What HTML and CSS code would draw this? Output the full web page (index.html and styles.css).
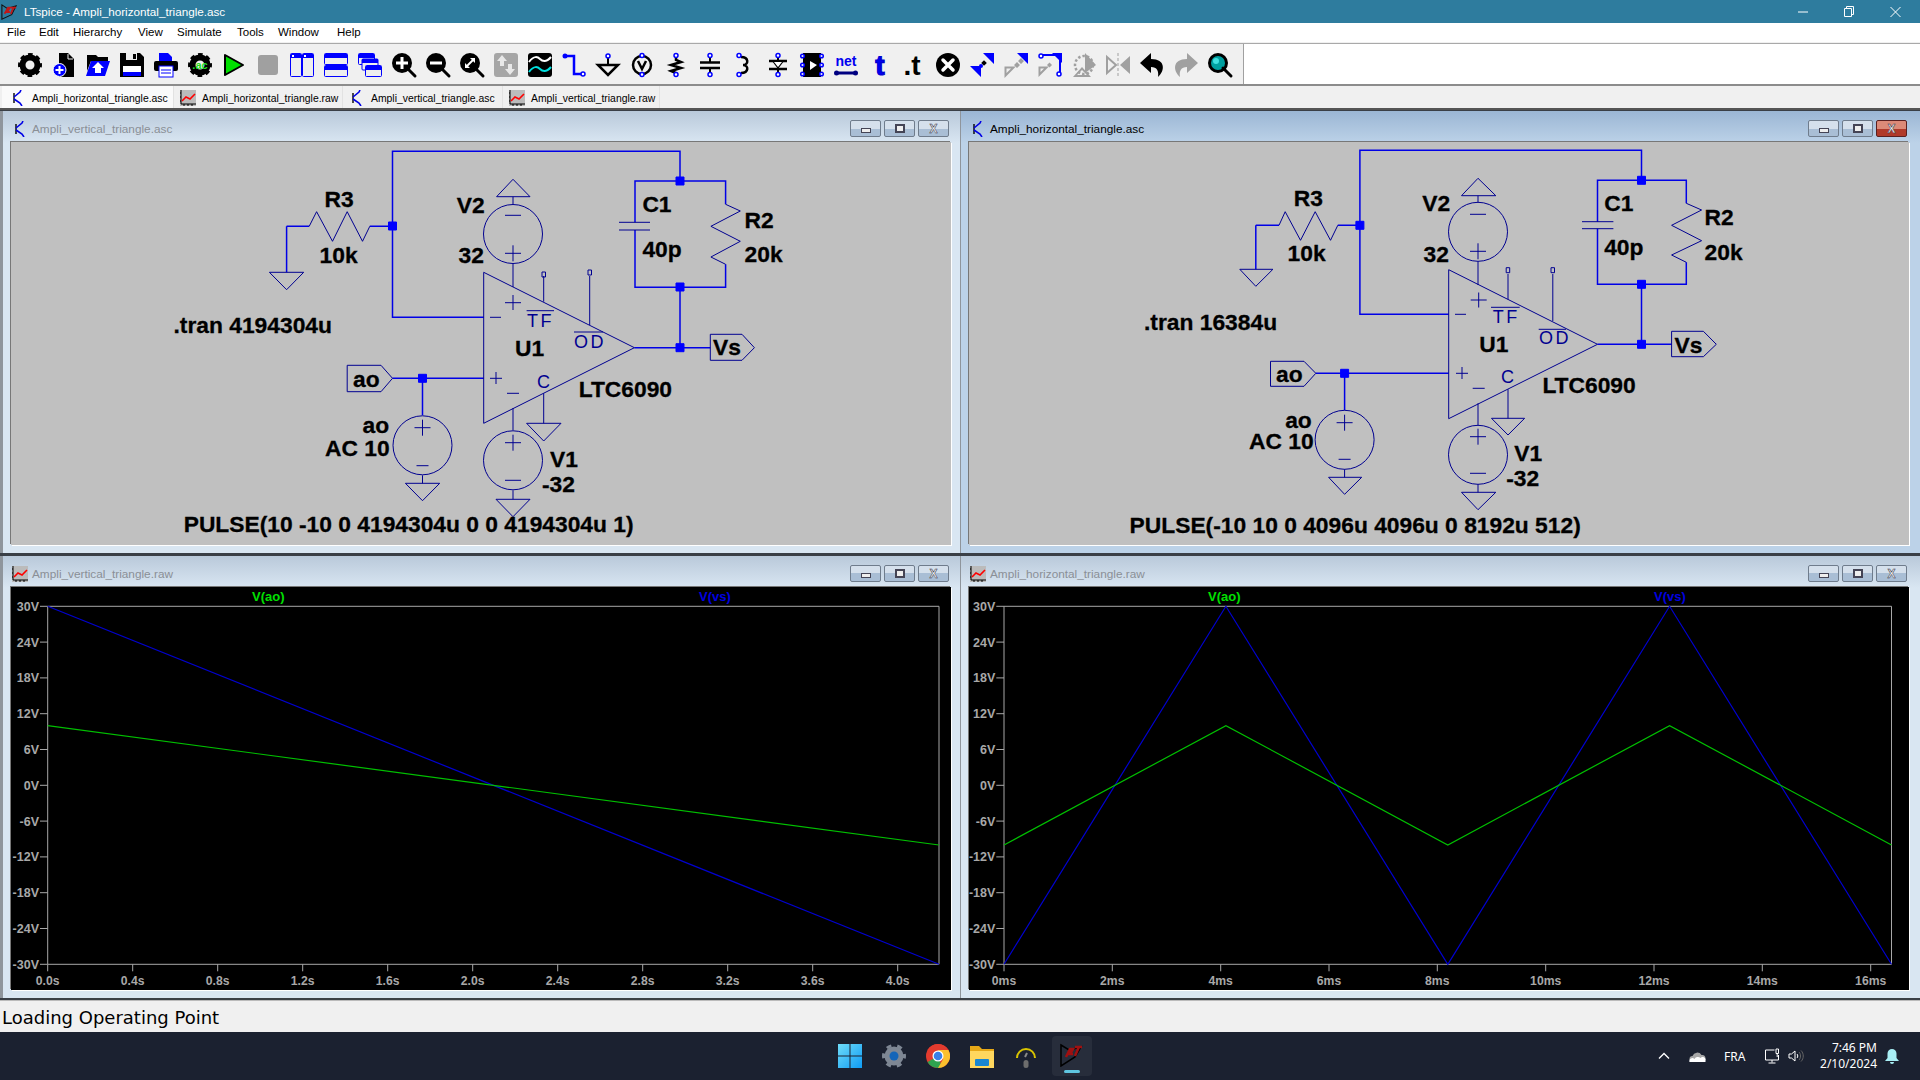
FILE: index.html
```html
<!DOCTYPE html>
<html lang="en">
<head>
<meta charset="utf-8">
<title>LTspice - Ampli_horizontal_triangle.asc</title>
<link rel="stylesheet" href="styles.css">
</head>
<body>
<svg class="defs" width="0" height="0">
<defs>
<symbol id="gear" viewBox="0 0 24 24"><circle cx="12" cy="12" r="7.5" fill="none" stroke="#000" stroke-width="6"/><circle cx="12" cy="12" r="10.5" fill="none" stroke="#000" stroke-width="3" stroke-dasharray="4.6 3.65" stroke-dashoffset="2.3"/></symbol>
<symbol id="sch" viewBox="0 0 16 16"><path d="M4 3v10" fill="none" stroke="#000" stroke-width="1.4"/><path d="M4 7l6-5 1-2M4 9l6 4 2 3" fill="none" stroke="#0000e6" stroke-width="1.6"/></symbol>
<symbol id="raw" viewBox="0 0 16 16"><rect width="16" height="16" fill="#bbb"/><path d="M1 0v14h15M0 3h1M0 7h1M0 11h1M4 14v2M8 14v2M12 14v2" fill="none" stroke="#000"/><path d="M2 11l4-4 4 2 5-5" fill="none" stroke="#f00" stroke-width="1.6"/></symbol>
</defs>
</svg>

<header class="titlebar">
  <svg class="app-icon" viewBox="0 0 18 18"><path d="M1 1l6 4 10-3-5 10-11 5z" fill="#2e7c9e" stroke="#111" stroke-width="1.2"/><path d="M4 11l4-7h2l-3 5h3M11 4h6M14 4l-3 7" fill="none" stroke="#c01818" stroke-width="2"/></svg>
  <span class="title-text">LTspice - Ampli_horizontal_triangle.asc</span>
  <div class="caption">
    <svg viewBox="0 0 46 14" class="cap-icon"><path d="M0 7h10" stroke="#fff" fill="none"/></svg>
    <svg viewBox="0 0 46 14" class="cap-icon"><path d="M.5 3.500h7v8h-7zM2.500 3.500v-2h7v8h-2" stroke="#fff" fill="none"/></svg>
    <svg viewBox="0 0 30 14" class="cap-icon cap-x"><path d="M.5 2l10 10M10.500 2l-10 10" stroke="#fff" fill="none"/></svg>
  </div>
</header>

<nav class="menubar">
  <span class="m1">File</span><span class="m2">Edit</span><span class="m3">Hierarchy</span><span class="m4">View</span><span class="m5">Simulate</span><span class="m6">Tools</span><span class="m7">Window</span><span class="m8">Help</span>
</nav>

<div class="toolbar">
  <div class="tools">
    <svg viewBox="0 0 24 24"><use href="#gear"/></svg>
    <svg viewBox="0 0 24 24"><path d="M7 0h9l6 6v18H7z"/><path d="M16 1v5h5" fill="none" stroke="#eee"/><circle cx="7.500" cy="17" r="6.500" fill="#00f" stroke="#fff"/><path d="M3.500 17h8M7.500 13v8" stroke="#fff" stroke-width="2"/></svg>
    <svg viewBox="0 0 24 24"><path d="M1 2h9l2 2h10v4H5l-4 10z"/><path d="M5 8h19l-5 15H0z" fill="#00f"/><path d="M12 9l6 6h-3v5h-6v-5H6z" fill="#fff"/></svg>
    <svg viewBox="0 0 24 24"><path d="M0 0h20l4 4v20H0z"/><rect x="6" y="0" width="11" height="7" fill="#eee"/><rect x="13" y="1" width="3" height="5"/><rect x="3" y="13" width="18" height="6" fill="#fff"/><rect x="3" y="19" width="18" height="4" fill="#00f"/></svg>
    <svg viewBox="0 0 24 24"><path d="M5 0h9l4 4v4H5z" fill="#00f"/><rect y="8" width="24" height="10" rx="2"/><rect x="5" y="13" width="14" height="11" fill="#fff" stroke="#00f"/><path d="M7 17h10M7 20h10" stroke="#00f"/></svg>
    <svg viewBox="0 0 24 24"><use href="#gear"/><text x="12" y="16" class="ac">.ac</text></svg>
    <svg viewBox="0 0 24 24"><path d="M3 2l18 10L3 22z" fill="#00e000" stroke="#000" stroke-width="2" stroke-linejoin="round"/></svg>
    <svg viewBox="0 0 24 24"><rect x="2" y="2" width="20" height="20" rx="3" fill="#a0a0a0"/></svg>
    <svg viewBox="0 0 24 24"><rect x=".5" y=".5" width="11" height="23" rx="1" fill="#eee" stroke="#00f"/><rect x="12.500" y=".5" width="11" height="23" rx="1" fill="#eee" stroke="#00f"/><path d="M1 1h10v4H1zM13 1h10v4H13z" fill="#00f"/><path d="M2 2h2v2H2zM14 2h2v2h-2z" fill="#fff"/></svg>
    <svg viewBox="0 0 24 24"><rect x=".5" y=".5" width="23" height="11" rx="1" fill="#eee" stroke="#00f"/><rect x=".5" y="12.500" width="23" height="11" rx="1" fill="#eee" stroke="#00f"/><path d="M1 1h22v4H1zM1 13h22v4H1z" fill="#00f"/></svg>
    <svg viewBox="0 0 24 24"><rect x=".5" y=".5" width="16" height="11" rx="1" fill="#eee" stroke="#00f"/><path d="M1 1h15v4H1z" fill="#00f"/><rect x="4" y="6" width="16" height="11" rx="1" fill="#eee" stroke="#00f"/><path d="M4 6h16v4H4z" fill="#00f"/><rect x="7.500" y="12.500" width="16" height="11" rx="1" fill="#eee" stroke="#00f"/><path d="M8 13h15v4H8z" fill="#00f"/></svg>
    <svg viewBox="0 0 24 24"><circle cx="10" cy="10" r="10"/><path d="M15 15l8 8" stroke="#000" stroke-width="3" stroke-linecap="round"/><path d="M4 10h12M10 4v12" stroke="#fff" stroke-width="3"/></svg>
    <svg viewBox="0 0 24 24"><circle cx="10" cy="10" r="10"/><path d="M15 15l8 8" stroke="#000" stroke-width="3" stroke-linecap="round"/><path d="M4 10h12" stroke="#fff" stroke-width="3"/></svg>
    <svg viewBox="0 0 24 24"><circle cx="10" cy="10" r="10"/><path d="M15 15l8 8" stroke="#000" stroke-width="3" stroke-linecap="round"/><path d="M6 14L14 6" stroke="#fff" stroke-width="2"/><path d="M10 5h5v5zM5 10v5h5z" fill="#fff"/></svg>
    <svg viewBox="0 0 24 24"><rect width="24" height="24" rx="3" fill="#a6a6a6"/><path d="M8 2l5 6h-3v5H6V8H3zM16 22l-5-6h3v-5h4v5h3z" fill="#e8e8e8"/></svg>
    <svg viewBox="0 0 24 24"><rect width="24" height="24" rx="3"/><path d="M1 9c5-7 9-5 11-3s6 4 11-2" fill="none" stroke="#fff" stroke-width="2"/><path d="M1 19c5-7 9-5 11-3s6 4 11-2" fill="none" stroke="#00e0e0" stroke-width="2"/></svg>
    <svg viewBox="0 0 24 24"><path d="M3 3h9v18h8" fill="none" stroke="#00f" stroke-width="2.500"/><circle cx="3" cy="3" r="2.500" fill="#00f"/><circle cx="21" cy="21" r="2" fill="#fff" stroke="#00f" stroke-width="1.500"/></svg>
    <svg viewBox="0 0 24 24"><path d="M12 4v7" stroke="#000" stroke-width="2"/><path d="M2 12h20L12 22z" fill="none" stroke="#000" stroke-width="2.500"/><circle cx="12" cy="3" r="2" fill="#fff" stroke="#00f" stroke-width="1.500"/></svg>
    <svg viewBox="0 0 24 24"><circle cx="12" cy="12" r="9" fill="none" stroke="#000" stroke-width="2.500"/><path d="M8 8l4 8 4-8" fill="none" stroke="#000" stroke-width="2.500"/><circle cx="12" cy="2.500" r="2" fill="#fff" stroke="#00f" stroke-width="1.500"/><circle cx="12" cy="21.500" r="2" fill="#fff" stroke="#00f" stroke-width="1.500"/></svg>
    <svg viewBox="0 0 24 24"><path d="M12 5v2l5 2-10 3 10 3-10 3 5 2v1" fill="none" stroke="#000" stroke-width="2.500"/><circle cx="12" cy="2.500" r="2" fill="#fff" stroke="#00f" stroke-width="1.500"/><circle cx="12" cy="21.500" r="2" fill="#fff" stroke="#00f" stroke-width="1.500"/></svg>
    <svg viewBox="0 0 24 24"><path d="M12 4v5M12 15v5" stroke="#000" stroke-width="2"/><path d="M2 9.500h20M2 15h20" stroke="#000" stroke-width="2.500"/><circle cx="12" cy="2.500" r="2" fill="#fff" stroke="#00f" stroke-width="1.500"/><circle cx="12" cy="21.500" r="2" fill="#fff" stroke="#00f" stroke-width="1.500"/></svg>
    <svg viewBox="0 0 24 24"><path d="M9 4c8 0 8 8 2 8 6 0 6 8-2 8" fill="none" stroke="#000" stroke-width="2.500"/><circle cx="7" cy="2.500" r="2" fill="#fff" stroke="#00f" stroke-width="1.500"/><circle cx="7" cy="21.500" r="2" fill="#fff" stroke="#00f" stroke-width="1.500"/></svg>
    <svg viewBox="0 0 24 24"><path d="M12 4v16" stroke="#000" stroke-width="2"/><path d="M3 8h18M3 16h18" stroke="#000" stroke-width="2.500"/><path d="M6 8h12l-6 8z"/><path d="M8 9h8l-4 5z" fill="#fff"/><circle cx="12" cy="2.500" r="2" fill="#fff" stroke="#00f" stroke-width="1.500"/><circle cx="12" cy="21.500" r="2" fill="#fff" stroke="#00f" stroke-width="1.500"/></svg>
    <svg viewBox="0 0 24 24"><rect x="3" y="0" width="18" height="24"/><path d="M10 8l7 4-7 5z" fill="#fff"/><g fill="#eee" stroke="#00f" stroke-width="1.500"><circle cx="2.500" cy="3" r="1.800"/><circle cx="21.500" cy="3" r="1.800"/><circle cx="2.500" cy="12" r="1.800"/><circle cx="21.500" cy="12" r="1.800"/><circle cx="2.500" cy="21" r="1.800"/><circle cx="21.500" cy="21" r="1.800"/></g></svg>
    <svg viewBox="0 0 24 24"><text x="12" y="13" class="net">net</text><path d="M2 20h20" stroke="#000080" stroke-width="3"/><circle cx="2.500" cy="20" r="2.500" fill="#000080"/><circle cx="21.500" cy="20" r="2.500" fill="#000080"/></svg>
    <svg viewBox="0 0 24 24"><text x="12" y="22" class="tt blue">t</text></svg>
    <svg viewBox="0 0 24 24"><text x="10" y="22" class="tt">.t</text></svg>
    <svg viewBox="0 0 24 24"><circle cx="12" cy="12" r="12"/><path d="M7 7l10 10M17 7L7 17" stroke="#fff" stroke-width="3.500" stroke-linecap="round"/></svg>
    <svg viewBox="0 0 24 24"><path d="M24 0v11L13 0zM0 13h11v11z" fill="#00f"/><circle cx="11" cy="13" r="2" fill="#00f"/><rect x="12" y="8" width="4" height="4" transform="rotate(45 14 10)" fill="#000"/></svg>
    <svg viewBox="0 0 24 24"><path d="M24 0v11L13 0z" fill="#00f"/><path d="M1.500 14.500h8l-8 8z" fill="none" stroke="#a0a0a0" stroke-width="2"/><path d="M10 12l3-3 3 3-3 3zM14 8l3-3 3 3-3 3z" fill="#a0a0a0"/></svg>
    <svg viewBox="0 0 24 24"><path d="M5 2h17v17" fill="none" stroke="#00f" stroke-width="2"/><path d="M24 0v10L14 0z" fill="#00f"/><circle cx="3" cy="3" r="2" fill="#fff" stroke="#00f" stroke-width="1.500"/><circle cx="21" cy="21" r="2" fill="#fff" stroke="#00f" stroke-width="1.500"/><path d="M1.500 14.500h7l-7 7z" fill="none" stroke="#a0a0a0" stroke-width="2"/><path d="M9 12l2.500-2.500 2.500 2.500-2.500 2.500z" fill="#a0a0a0"/></svg>
    <svg viewBox="0 0 24 24"><path d="M13 0l11 12-11 8z" fill="#a0a0a0"/><path d="M1 24l9-10 9 10z M5 22h10l-5-5z" fill="#a0a0a0" fill-rule="evenodd"/><circle cx="12" cy="12" r="9" fill="none" stroke="#a0a0a0" stroke-width="2.500" stroke-dasharray="2.500 2"/></svg>
    <svg viewBox="0 0 24 24"><path d="M24 3v18l-10-9z" fill="#a0a0a0"/><path d="M1 4l9 8-9 8z" fill="none" stroke="#a0a0a0" stroke-width="2"/><path d="M12 0v24" stroke="#a0a0a0" stroke-dasharray="3 2"/></svg>
    <svg viewBox="0 0 24 24"><path d="M11 0L0 10l11 10v-6c6 0 8 4 7 10 7-6 8-18-7-18z"/></svg>
    <svg viewBox="0 0 24 24"><path d="M13 0l11 10-11 10v-6C7 14 5 18 6 24-1 18-2 6 13 6z" fill="#a0a0a0"/></svg>
    <svg viewBox="0 0 24 24"><circle cx="10" cy="10" r="8.500" fill="#00a0a0" stroke="#000" stroke-width="3"/><circle cx="8" cy="8" r="3" fill="#40e0e0"/><path d="M15 15l8 8" stroke="#000" stroke-width="3" stroke-linecap="round"/></svg>
  </div>
</div>

<div class="tabs">
  <div class="tab tab-active"><svg class="tab-icon"><use href="#sch"/></svg>Ampli_horizontal_triangle.asc</div>
  <div class="tab"><svg class="tab-icon"><use href="#raw"/></svg>Ampli_horizontal_triangle.raw</div>
  <div class="tab"><svg class="tab-icon"><use href="#sch"/></svg>Ampli_vertical_triangle.asc</div>
  <div class="tab"><svg class="tab-icon"><use href="#raw"/></svg>Ampli_vertical_triangle.raw</div>
</div>

<main class="mdi">
  <section class="win win-left">
    <div class="win-title"><svg class="win-icon"><use href="#sch"/></svg><span class="win-name">Ampli_vertical_triangle.asc</span>
      <div class="btns"><b class="btn"><i class="g-min"></i></b><b class="btn"><i class="g-max"></i></b><b class="btn"><i class="g-x">X</i></b></div></div>
    <svg class="canvas sch" viewBox="11 142 940 403" width="940" height="403">
      <path class="wire" d="M392.500 226.300V151.300H680V181M635 222.300V181H725.600V204.300M392.500 226.300V317.300H483.700M635 230V287.300H725.600V264.300M680 287.300V347.700M634.400 347.700H710.300M392.500 378.300H483.700M422.500 378.300V415.300M286.600 226.300V272.300M286.600 226.300H309.200M369.800 226.300H392.500"/>
      <path class="comp" d="M309.200 226.300L316.600 211.700 332.500 241.300 347.200 211.700 362.500 241.300 369.800 226.300M269.400 272.300H303.700L286.600 289.700ZM513 196.700V204M496.600 196.700H530L513 179.300ZM513 263.700V287M483.700 272.300L634.400 347.700 483.700 423.300ZM543.700 276V301.700M589.700 276V325M543.700 393.300V423.300M526.600 423.300H561L543.700 441ZM513 408V430.300M513 490.300V499.300M496 499.300H530L513 516.700ZM422.500 475.300V483.300M405.400 483.300H439.700L422.500 500.700ZM619 222.300H650M619 230H650M725.600 204.300L740.300 211 710.900 226.300 740.300 241.300 710.900 257 725.600 264.300M710.300 334.300H742L754.400 347.700 742 360.300H710.300ZM347.200 365.300H381L392.500 378.300 381 391.700H347.200ZM505 215.300H521M505 253.300H521M513 245.300V261.300M505 442.700H521M513 434.700V450.700M505 480.300H521M414.500 427.700H430.500M422.500 419.700V435.700M416.500 465.700H428.500M505 302.700H521M513 295V310M490 317.300H501M490 378.300H502M496 372V384M507 393.300H519M526.600 310.700H554M574 332H603M542 272h3.500v5H542ZM588 270h3.500v5H588Z"/>
      <circle class="comp" cx="513" cy="234" r="29.500"/><circle class="comp" cx="513" cy="460.300" r="29.500"/><circle class="comp" cx="422.500" cy="445.300" r="29.500"/>
      <path class="jct" d="M676 177h8v8h-8zM676 283h8v8h-8zM388.500 222h8v8h-8zM676 343.700h8v8h-8zM418.500 374.300h8v8h-8z"/>
      <text class="s" x="527" y="326.700">TF</text><text class="s" x="574" y="348">OD</text><text class="s cc" x="537" y="387.700">C</text>
      <text class="t" x="324.500" y="206.700">R3</text><text class="t" x="319.600" y="262.700">10k</text><text class="t" x="456.800" y="212.700">V2</text><text class="t" x="458.600" y="263.300">32</text>
      <text class="t" x="642.400" y="211.500">C1</text><text class="t" x="642.400" y="257.300">40p</text><text class="t" x="744.600" y="228">R2</text><text class="t" x="744.600" y="262">20k</text>
      <text class="t" x="515" y="355.700">U1</text><text class="t" x="578.700" y="397.300">LTC6090</text><text class="t" x="713" y="355">Vs</text><text class="t" x="353" y="386.700">ao</text>
      <text class="t" x="362.500" y="432.700">ao</text><text class="t" x="325" y="455.700">AC 10</text><text class="t" x="550" y="466.700">V1</text><text class="t" x="542" y="491.700">-32</text>
      <text class="t" x="173.500" y="333.300">.tran 4194304u</text><text class="t" x="183.700" y="531.700">PULSE(10 -10 0 4194304u 0 0 4194304u 1)</text>
    </svg>
  </section>

  <section class="win win-right win-active">
    <div class="win-title"><svg class="win-icon"><use href="#sch"/></svg><span class="win-name">Ampli_horizontal_triangle.asc</span>
      <div class="btns"><b class="btn"><i class="g-min"></i></b><b class="btn"><i class="g-max"></i></b><b class="btn btn-close"><i class="g-x">X</i></b></div></div>
    <svg class="canvas sch" viewBox="969 142 940 403" width="940" height="403">
      <path class="wire" d="M1359.900 225.300V150.300H1641.500V180.300M1597.500 221.700V180.300H1686.300V203.300M1359.900 225.300V314.300H1448.700M1597.500 228.700V284.300H1686.300V262.300M1641.500 284.300V344.300M1597.500 344.300H1671.600M1315.800 373.300H1448.700M1344.600 373.300V410.300M1255.800 225.300V269.300M1255.800 225.300H1279M1337.800 225.300H1359.900"/>
      <path class="comp" d="M1279 225.300L1285.200 211.700 1300.500 240.300 1315.200 211.700 1330.500 240.300 1337.800 225.300M1239.800 269.300H1272.900L1255.800 286.300ZM1478 195.700V202.300M1461.500 195.700H1495.800L1478 178.300ZM1478 261.300V285M1448.700 269.700L1597.500 344.300 1448.700 418.700ZM1508 274V299.300M1552.800 274V321M1508 389.300V418.300M1491.500 418.300H1524.600L1508 435ZM1478 403.300V425.300M1478 484.300V492.300M1461.500 492.300H1495.800L1478 509.700ZM1344.600 469.300V477.300M1328.600 477.300H1361.700L1344.600 494.300ZM1582 221.700H1613.400M1582 228.700H1613.400M1686.300 203.300L1701.600 210 1671.600 225.300 1701.600 240.700 1671.600 255 1686.300 262.300M1671.600 331.300H1703.400L1716.300 344.300 1703.400 356.700H1671.600ZM1270.500 361.300H1304L1315.800 373.300 1304 386.300H1270.500ZM1470 214.300H1486M1470 251.300H1486M1478 243.300V259.300M1470 436.700H1486M1478 428.700V444.700M1470 473.300H1486M1336.600 422.700H1352.600M1344.600 414.700V430.700M1338.600 459.300H1350.600M1470.700 300H1486.700M1478.700 292.500V307.500M1455 314.300H1466M1456 373.300H1468M1462 367V379M1472.700 388.300H1484.700M1491 307.300H1519.700M1538.700 329.300H1566M1506.200 267.700h3.500v5h-3.500ZM1551 267.700h3.500v5H1551Z"/>
      <circle class="comp" cx="1478" cy="231.800" r="29.500"/><circle class="comp" cx="1478" cy="454.800" r="29.500"/><circle class="comp" cx="1344.600" cy="439.800" r="29.500"/>
      <path class="jct" d="M1637.500 176.300h8v8h-8zM1637.500 280.300h8v8h-8zM1355.900 221.300h8v8h-8zM1637.500 340.300h8v8h-8zM1340.600 369.300h8v8h-8z"/>
      <text class="s" x="1492.700" y="323.300">TF</text><text class="s" x="1539" y="344.300">OD</text><text class="s cc" x="1501" y="382.700">C</text>
      <text class="t" x="1293.700" y="206">R3</text><text class="t" x="1287.600" y="260.700">10k</text><text class="t" x="1422.300" y="210.700">V2</text><text class="t" x="1423.600" y="261.700">32</text>
      <text class="t" x="1604.200" y="210.700">C1</text><text class="t" x="1604.200" y="255.300">40p</text><text class="t" x="1704.600" y="225.300">R2</text><text class="t" x="1704.600" y="259.700">20k</text>
      <text class="t" x="1479.300" y="352.300">U1</text><text class="t" x="1542.400" y="392.700">LTC6090</text><text class="t" x="1674.600" y="352.700">Vs</text><text class="t" x="1276" y="381.700">ao</text>
      <text class="t" x="1285.200" y="427.700">ao</text><text class="t" x="1249" y="449.300">AC 10</text><text class="t" x="1514.200" y="460.700">V1</text><text class="t" x="1506.200" y="485.700">-32</text>
      <text class="t" x="1144" y="329.700">.tran 16384u</text><text class="t" x="1129.600" y="532.700">PULSE(-10 10 0 4096u 4096u 0 8192u 512)</text>
    </svg>
  </section>

  <section class="win win-left">
    <div class="win-title"><svg class="win-icon"><use href="#raw"/></svg><span class="win-name">Ampli_vertical_triangle.raw</span>
      <div class="btns"><b class="btn"><i class="g-min"></i></b><b class="btn"><i class="g-max"></i></b><b class="btn"><i class="g-x">X</i></b></div></div>
    <svg class="canvas plot" viewBox="11 587 940 403" width="940" height="403">
      <path class="axis" d="M47.700 606.300H939V964.300H47.700ZM40 606.300h7.700M40 642.100h7.700M40 677.900h7.700M40 713.700h7.700M40 749.500h7.700M40 785.300h7.700M40 821.100h7.700M40 856.900h7.700M40 892.700h7.700M40 928.500h7.700M40 964.300h7.700M47.700 964.300v7M132.700 964.300v7M217.700 964.300v7M302.700 964.300v7M387.700 964.300v7M472.700 964.300v7M557.700 964.300v7M642.700 964.300v7M727.700 964.300v7M812.700 964.300v7M897.700 964.300v7"/>
      <path class="blue" d="M47.700 606.300L939 964.300"/><path class="green" d="M47.700 725.600L939 845"/>
      <text class="lg g" x="252" y="601">V(ao)</text><text class="lg b" x="699" y="601">V(vs)</text>
      <g class="yl"><text x="39" y="610.800">30V</text><text x="39" y="646.600">24V</text><text x="39" y="682.400">18V</text><text x="39" y="718.200">12V</text><text x="39" y="754">6V</text><text x="39" y="789.800">0V</text><text x="39" y="825.600">-6V</text><text x="39" y="861.400">-12V</text><text x="39" y="897.200">-18V</text><text x="39" y="933">-24V</text><text x="39" y="968.800">-30V</text></g>
      <g class="xl"><text x="47.700" y="985">0.0s</text><text x="132.700" y="985">0.4s</text><text x="217.700" y="985">0.8s</text><text x="302.700" y="985">1.2s</text><text x="387.700" y="985">1.6s</text><text x="472.700" y="985">2.0s</text><text x="557.700" y="985">2.4s</text><text x="642.700" y="985">2.8s</text><text x="727.700" y="985">3.2s</text><text x="812.700" y="985">3.6s</text><text x="897.700" y="985">4.0s</text></g>
    </svg>
  </section>

  <section class="win win-right">
    <div class="win-title"><svg class="win-icon"><use href="#raw"/></svg><span class="win-name">Ampli_horizontal_triangle.raw</span>
      <div class="btns"><b class="btn"><i class="g-min"></i></b><b class="btn"><i class="g-max"></i></b><b class="btn"><i class="g-x">X</i></b></div></div>
    <svg class="canvas plot" viewBox="969 587 940 403" width="940" height="403">
      <path class="axis" d="M1004 606.300H1891.500V964.300H1004ZM996.300 606.300h7.700M996.300 642.100h7.700M996.300 677.900h7.700M996.300 713.700h7.700M996.300 749.500h7.700M996.300 785.300h7.700M996.300 821.100h7.700M996.300 856.900h7.700M996.300 892.700h7.700M996.300 928.500h7.700M996.300 964.300h7.700M1004 964.300v7M1112.300 964.300v7M1220.700 964.300v7M1329 964.300v7M1437.300 964.300v7M1545.700 964.300v7M1654 964.300v7M1762.300 964.300v7M1870.700 964.300v7"/>
      <path class="blue" d="M1004 964.300L1225.900 606.300 1447.800 964.300 1669.600 606.300 1891.500 964.300"/><path class="green" d="M1004 845L1225.900 725.600 1447.800 845 1669.600 725.600 1891.500 845"/>
      <text class="lg g" x="1208" y="601">V(ao)</text><text class="lg b" x="1654" y="601">V(vs)</text>
      <g class="yl"><text x="995.300" y="610.800">30V</text><text x="995.300" y="646.600">24V</text><text x="995.300" y="682.400">18V</text><text x="995.300" y="718.200">12V</text><text x="995.300" y="754">6V</text><text x="995.300" y="789.800">0V</text><text x="995.300" y="825.600">-6V</text><text x="995.300" y="861.400">-12V</text><text x="995.300" y="897.200">-18V</text><text x="995.300" y="933">-24V</text><text x="995.300" y="968.800">-30V</text></g>
      <g class="xl"><text x="1004" y="985">0ms</text><text x="1112.300" y="985">2ms</text><text x="1220.700" y="985">4ms</text><text x="1329" y="985">6ms</text><text x="1437.300" y="985">8ms</text><text x="1545.700" y="985">10ms</text><text x="1654" y="985">12ms</text><text x="1762.300" y="985">14ms</text><text x="1870.700" y="985">16ms</text></g>
    </svg>
  </section>
</main>

<div class="status">Loading Operating Point</div>

<footer class="taskbar">
  <div class="task-apps">
    <svg class="ti" viewBox="0 0 24 24"><defs><linearGradient id="win" x1="0" y1="0" x2="1" y2="1"><stop offset="0" stop-color="#6fdcf8"/><stop offset="1" stop-color="#0f9cf5"/></linearGradient></defs><path d="M0 0h11.500v11.500H0zM12.500 0H24v11.500H12.500zM0 12.500h11.500V24H0zM12.500 12.500H24V24H12.500z" fill="url(#win)"/></svg>
    <svg class="ti" viewBox="0 0 24 24"><circle cx="12" cy="12" r="6.500" fill="none" stroke="#7e8794" stroke-width="6"/><circle cx="12" cy="12" r="10.500" fill="none" stroke="#7e8794" stroke-width="3" stroke-dasharray="5 5.990" stroke-dashoffset="2.500"/><circle cx="12" cy="12" r="4.500" fill="#1565b8"/></svg>
    <svg class="ti" viewBox="0 0 24 24"><circle cx="12" cy="12" r="12" fill="#e33b2e"/><path d="M12 12L1.600 18A12 12 0 0 0 12 24 12 12 0 0 0 16 23.300z" fill="#2ea44f"/><path d="M12 6h10.400A12 12 0 0 1 12 24l5.200-9z" fill="#fbc02d"/><path d="M12 6h10.400A12 12 0 0 0 1.600 6L6.800 15z" fill="#e33b2e"/><circle cx="12" cy="12" r="5.500" fill="#fff"/><circle cx="12" cy="12" r="4.300" fill="#3a80e8"/></svg>
    <svg class="ti" viewBox="0 0 24 24"><path d="M0 2h9l3 3h12v19H0z" fill="#e6a817"/><path d="M0 7h24v17H0z" fill="#ffd75e"/><rect x="5" y="15" width="14" height="7" rx="1" fill="#1a86d0"/></svg>
    <svg class="ti" viewBox="0 0 24 24"><path d="M3 14a9 9 0 1 1 18 0" fill="none" stroke="#d9c400" stroke-width="2"/><path d="M13 9l-2 4" stroke="#8a8a8a" stroke-width="2"/><rect x="9.500" y="16" width="5" height="8" rx="2.500" fill="#6d6d6d"/></svg>
    <div class="task-active"><svg viewBox="0 0 24 24"><path d="M1 2l8 5 12-3-6 10-14 9z" fill="none" stroke="#000" stroke-width="1.500"/><path d="M6 14l4-8h3l-3 5h3M15 4h7M19 4l-4 9" fill="none" stroke="#a01010" stroke-width="2.500"/></svg><i class="task-line"></i></div>
  </div>
  <div class="tray">
    <svg class="t1" viewBox="0 0 12 8"><path d="M1 6.500l5-5 5 5" fill="none" stroke="#fff" stroke-width="1.300"/></svg>
    <svg class="t2" viewBox="0 0 16 11"><path d="M3 11a3 3 0 0 1 0-6 5 5 0 0 1 9-1 3.500 3.500 0 0 1 1 7z" fill="#a8a8a8"/><path d="M0 11h16V8a3 3 0 0 0-5-1 4 4 0 0 0-6 1 3 3 0 0 0-5 3z" fill="#fff"/></svg>
    <span class="lang">FRA</span>
    <svg class="t3" viewBox="0 0 16 16"><path d="M9.500 2H.5v10h13V7M7 12v2.500M3.500 15h7M11 1h2.500v4.500H11zM12.200 5.500V9" fill="none" stroke="#fff"/></svg>
    <svg class="t4" viewBox="0 0 16 16"><path d="M1 6h2.500L7 3v10L3.500 10H1z" fill="none" stroke="#fff"/><path d="M9 6c1 1 1 3 0 4" fill="none" stroke="#fff"/><path d="M11 4c2 2 2 6 0 8M13 2.500c3 3 3 8 0 11" fill="none" stroke="#666"/></svg>
    <div class="clock"><span>7:46 PM</span><span>2/10/2024</span></div>
    <svg class="t5" viewBox="0 0 14 15"><path d="M7 0a4.500 4.500 0 0 1 4.500 4.500V9L14 12H0l2.500-3V4.500A4.500 4.500 0 0 1 7 0z M5 13h4a2 2 0 0 1-4 0z" fill="#a8eef4"/></svg>
  </div>
</footer>
</body>
</html>
```

FILE: styles.css
```css
* { box-sizing: border-box; }
html, body { margin: 0; padding: 0; }
body {
  width: 1920px;
  height: 1080px;
  overflow: hidden;
  display: flex;
  flex-direction: column;
  font-family: "Liberation Sans", Arial, sans-serif;
  background: #f0f0f0;
}
.defs { position: absolute; }

/* app title bar */
.titlebar {
  height: 23px;
  flex: none;
  background: #2e7c9e;
  display: flex;
  align-items: center;
  color: #fff;
  font-size: 11.7px;
}
.app-icon { width: 16px; height: 18px; margin: 0 7px 0 1px; flex: none; }
.caption { margin-left: auto; display: flex; }
.cap-icon { width: 46px; height: 14px; display: block; }
.cap-x { width: 30px; }

/* menu */
.menubar {
  height: 20px;
  flex: none;
  background: #fff;
  font-size: 11.5px;
  line-height: 19px;
  color: #000;
  display: flex;
  border-bottom: 1px solid #f0f0f0;
}
.m1 { margin-left: 7px; width: 32px; }
.m2 { width: 34px; }
.m3 { width: 65px; }
.m4 { width: 39px; }
.m5 { width: 60px; }
.m6 { width: 41px; }
.m7 { width: 59px; }

/* toolbar */
.toolbar {
  height: 43px;
  flex: none;
  background: #fff;
  border-top: 1px solid #a9a9a9;
  border-bottom: 2px solid #8c8c8c;
}
.tools {
  width: 1244px;
  height: 40px;
  background: #f0f0f0;
  border-right: 1px solid #a0a0a0;
  padding: 1px 0 0 18px;
  display: flex;
  align-items: center;
  gap: 10px;
}
.tools svg { width: 24px; height: 24px; flex: none; overflow: visible; }
.ac { font: bold 11px "Liberation Sans", sans-serif; fill: #20e020; text-anchor: middle; }
.net { font: bold 14px "Liberation Sans", sans-serif; fill: #0000f0; text-anchor: middle; }
.tt { font: bold 28px "Liberation Sans", sans-serif; fill: #000; text-anchor: middle; }
.tt.blue { fill: #0000f0; }

/* tabs */
.tabs {
  height: 24px;
  flex: none;
  background: #f0f0f0;
  border-bottom: 2px solid #555;
  display: flex;
  padding-left: 2px;
  font-size: 10.4px;
  color: #000;
}
.tab {
  display: flex;
  align-items: center;
  padding: 2px 0 0 8px;
  border-right: 1px solid #e2e2e2;
  width: 169px;
}
.tab:nth-child(2) { width: 169px; }
.tab:nth-child(3) { width: 160px; }
.tab:nth-child(4) { width: 157px; }
.tab-active { background: #fafafa; width: 172px; }
.tab-icon { width: 16px; height: 16px; margin-right: 6px; flex: none; }
.tab:nth-child(n+2) { padding-left: 6px; }

/* MDI windows */
.mdi {
  height: 890px;
  flex: none;
  display: grid;
  grid-template-columns: 960px 960px;
  grid-template-rows: 445px 445px;
}
.win {
  display: flex;
  flex-direction: column;
  background: linear-gradient(#b9c9da, #d9e6f2 32px);
  border-top: 1px solid #3a3f46;
  border-bottom: 2px solid #3a3f46;
}
.win-left { padding: 0 9px 0 11px; box-shadow: inset 3px 0 0 #8f959c; }
.win-right { padding: 0 11px 0 9px; box-shadow: inset 1px 0 0 #8f959c; }
.win-active { background: linear-gradient(#9bb6d4, #bcd2e8 32px); }
.win-title {
  height: 31px;
  flex: none;
  display: flex;
  align-items: center;
  font-size: 11.8px;
  color: #8a8f96;
}
.win-active .win-title { color: #000; }
.win-icon { width: 16px; height: 16px; margin: 4px 4px 0 1px; flex: none; }
.win-name { margin-top: 5px; }
.btns { margin-left: auto; margin-right: 2px; margin-top: 4px; display: flex; gap: 3px; }
.btn {
  width: 31px;
  height: 17px;
  display: flex;
  align-items: center;
  justify-content: center;
  border: 1px solid #6f7c8c;
  border-radius: 2px;
  background: linear-gradient(#d5e0ec 50%, #a9bed5 50%);
}
.btn-close { background: linear-gradient(#dc8a78 50%, #b03a2a 50%); border-color: #5a2020; }
.g-min { width: 10px; height: 5px; border: 1px solid #445; background: #eee; margin-top: 3px; }
.g-max { width: 10px; height: 9px; border: 2px solid #445; background: #eee; }
.g-x { font: bold 12px "Liberation Sans", sans-serif; color: #f4f4f4; -webkit-text-stroke: .5px #334; }
.canvas { display: block; flex: none; }
.sch { background: #c0c0c0; box-shadow: -1px -1px 0 #777, 1px 1px 0 #fff; }
.plot { background: #000; box-shadow: -1px -1px 0 #777, 1px 1px 0 #fff; }

/* schematic */
.wire { fill: none; stroke: #0000e6; stroke-width: 1.5; }
.comp { fill: none; stroke: #000090; stroke-width: 1; }
.jct { fill: #0000ff; stroke: #0000ff; stroke-width: 1; }
.t { font: bold 22.8px "Liberation Sans", sans-serif; fill: #000; stroke: #000; stroke-width: .3px; }
.s { font: 18px "Liberation Sans", sans-serif; fill: #000090; letter-spacing: 2.5px; }
.cc { letter-spacing: 0; }

/* plot */
.axis { fill: none; stroke: #a8a8a8; stroke-width: 1; }
.blue { fill: none; stroke: #0000d0; stroke-width: 1.2; }
.green { fill: none; stroke: #00c000; stroke-width: 1.2; }
.lg { font: bold 13px "Liberation Sans", sans-serif; }
.lg.g { fill: #00e000; }
.lg.b { fill: #0000e0; }
.yl text { font: bold 12.5px "Liberation Sans", sans-serif; fill: #a8a8a8; text-anchor: end; }
.xl text { font: bold 12.2px "Liberation Sans", sans-serif; fill: #a8a8a8; text-anchor: middle; }

/* status */
.status {
  height: 32px;
  flex: none;
  border-top: 1px solid #bbb;
  background: #f0f0f0;
  font: 18px "DejaVu Sans", sans-serif;
  line-height: 34px;
  padding-left: 2px;
  color: #000;
}

/* taskbar */
.taskbar {
  height: 48px;
  flex: none;
  background: #1b2130;
  display: flex;
  align-items: center;
  color: #fff;
  font: 12px "Noto Sans", sans-serif;
}
.task-apps { display: flex; align-items: center; margin-left: 838px; gap: 20px; }
.ti { width: 24px; height: 24px; flex: none; }
.task-active {
  width: 40px;
  height: 40px;
  margin-left: -6px;
  background: #272d3b;
  border-radius: 4px;
  display: flex;
  flex-direction: column;
  align-items: center;
  padding-top: 7px;
}
.task-active svg { width: 24px; height: 24px; }
.task-line { width: 16px; height: 3px; margin-top: 3px; background: #5fc5e0; border-radius: 2px; }
.tray { margin-left: auto; display: flex; align-items: center; }
.t1 { width: 12px; height: 8px; margin-right: 19px; }
.t2 { width: 17px; height: 11px; margin-right: 18px; }
.lang { width: 22px; margin-right: 19px; }
.t3 { width: 16px; height: 16px; margin-right: 7px; }
.t4 { width: 16px; height: 16px; margin-right: 16px; }
.clock { display: flex; flex-direction: column; align-items: flex-end; line-height: 16px; margin-right: 8px; }
.t5 { width: 14px; height: 15px; margin-right: 21px; }
```
